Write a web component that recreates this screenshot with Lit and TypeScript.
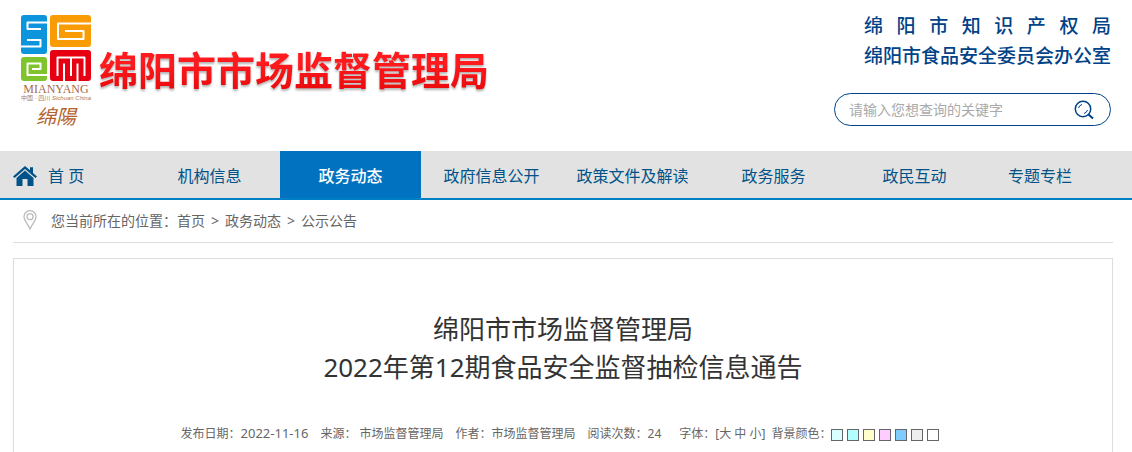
import { LitElement, html, css, svg } from "lit";
import { customElement } from "lit/decorators.js";
import { classMap } from "lit/directives/class-map.js";

const NAV = ["首 页", "机构信息", "政务动态", "政府信息公开", "政策文件及解读", "政务服务", "政民互动", "专题专栏"];
const SWATCHES = [
  ["浅蓝", "#d9ffff"],
  ["青色", "#b3ffff"],
  ["浅黄", "#ffffcc"],
  ["粉色", "#ffccff"],
  ["天蓝", "#80ccff"],
  ["浅灰", "#eeeeee"],
  ["白色", "#ffffff"],
];

@customElement("city-logo")
class CityLogo extends LitElement {
  static styles = css`
    :host { display: block; flex: none; }
    .art { display: block; overflow: visible; }
    .latin { font-family: "Liberation Serif", serif; font-size: 12px; fill: #a96a45; }
    .tiny { font-family: "Liberation Sans", "Noto Sans CJK SC", sans-serif; font-size: 6px; fill: #b07a58; }
    .slant { font-style: italic; }
    .brush { font-family: "Noto Sans CJK SC", sans-serif; font-size: 20px; font-style: italic; fill: #b4622d; }
  `;
  render() {
    return html`<svg class="art" width="72" height="112" viewBox="0 0 72 112" role="img" aria-label="绵阳">
      ${svg`
      <rect x="1" y="1" width="26" height="39" rx="3" fill="#0c94dc"/>
      <rect x="30" y="1" width="41" height="32" rx="3" fill="#f99b05"/>
      <rect x="1" y="43" width="26" height="24" rx="3" fill="#80c42d"/>
      <rect x="30" y="36" width="41" height="31" rx="3" fill="#e60012"/>
      <g fill="none" stroke="#fff" stroke-width="2" stroke-linejoin="round">
        <path d="M28 8.500H7.500V15H21"/>
        <path d="M0 32.500H20.500V26H7"/>
        <path d="M72 9.500H38V25H63.500V17H45"/>
        <path d="M28 61H7.500V49.500H20.500V55H12"/>
        <path d="M37.500 62V43.500H64.500V62M44 68V49.500M51 43.500V62M57.500 68V49.500"/>
      </g>
      <text class="latin" x="36" y="79" text-anchor="middle">MIANYANG</text>
      <text class="tiny" x="36" y="86" text-anchor="middle">中国 · 四川 <tspan class="slant">Sichuan China</tspan></text>
      <text class="brush" x="36" y="110" text-anchor="middle">绵陽</text>`}
    </svg>`;
  }
}

@customElement("app-root")
class AppRoot extends LitElement {
  static styles = css`
    :host { display: block; font-family: "Noto Sans", "Noto Sans CJK SC", sans-serif; color: #666; background: #fff; }
    * { box-sizing: border-box; }
    a { color: inherit; text-decoration: none; }
    .header { display: flex; justify-content: space-between; padding: 14px 21px 25px 20px; }
    .brand { display: flex; gap: 7px; }
    .name { margin: 28px 0 0; font-size: 39px; line-height: 56px; font-weight: 700; white-space: nowrap;
      color: transparent; background: linear-gradient(#ff1a1e 25%, #d90000 80%); background-clip: text; -webkit-background-clip: text;
      filter: drop-shadow(0 2px 1px rgba(0, 0, 0, 0.3)); }
    .side { display: flex; flex-direction: column; align-items: flex-end; }
    .offices { color: #004287; font-size: 19px; line-height: 30px; font-weight: 500; margin-top: -3px; }
    .office { margin: 0; }
    .spread { text-align: justify; text-align-last: justify; }
    .search { display: flex; align-items: center; width: 277px; height: 33px; margin-top: 22px; padding: 0 16px 0 14px;
      border: 1px solid #004287; border-radius: 17px; }
    .query { flex: 1; min-width: 0; border: 0; padding: 0; background: none; outline: none; font: inherit; font-size: 14px; color: #333; }
    .query::placeholder { color: #a9a9a9; opacity: 1; }
    .go { display: flex; border: 0; padding: 0; background: none; color: #004287; }
    .nav { display: grid; grid-template-columns: 139fr repeat(6, 141fr) 110fr; padding-right: 37px; background: #e2e2e2; border-bottom: 2px solid #0080c4; }
    .tab { display: flex; align-items: center; justify-content: center; height: 47px; font-size: 16px; color: #005288; white-space: nowrap; }
    .home { justify-content: flex-start; gap: 11px; padding-left: 13px; }
    .icon { margin-top: 3px; }
    .active { background: #0072bf; color: #fff; font-weight: 500; }
    .page { padding: 0 19px 0 13px; }
    .crumbs { display: flex; align-items: center; gap: 14px; height: 43px; padding: 0 0 2px 10px; border-bottom: 1px solid #ddd; font-size: 14px; }
    .sep { margin: 0 6px; }
    .article { margin-top: 15px; padding: 51px 20px 8px; border: 1px solid #ddd; border-bottom: 0; }
    .title { margin: 0; font-size: 26px; line-height: 38px; font-weight: 400; text-align: center; color: #333; }
    .meta { display: flex; justify-content: center; align-items: center; gap: 12px; margin-top: 38px; padding-right: 6px; font-size: 12px; line-height: 20px; white-space: nowrap; }
    .date { font-size: 13px; line-height: 16px; }
    .tools { display: flex; align-items: center; gap: 6px; margin-left: 6px; }
    .colors { display: flex; align-items: center; }
    .swatches { display: flex; gap: 4px; padding-top: 2px; }
    .swatch { width: 12px; height: 12px; padding: 0; border: 1px solid #666; }
  `;
  render() {
    return html`
      <header class="header">
        <div class="brand"><city-logo></city-logo><h1 class="name">绵阳市市场监督管理局</h1></div>
        <div class="side">
          <div class="offices">
            <p class="office spread">绵 阳 市 知 识 产 权 局</p>
            <p class="office">绵阳市食品安全委员会办公室</p>
          </div>
          <form class="search" role="search">
            <input class="query" type="text" aria-label="搜索" placeholder="请输入您想查询的关键字" />
            <button class="go" type="button" aria-label="搜索">
              <svg width="20" height="20" viewBox="0 0 20 20" fill="none" stroke="currentColor" stroke-width="1.5">
                <circle cx="9" cy="9" r="7.7" /><path d="M14.5 14.5L19 18.5" stroke-width="2" /><path d="M4.500 8A5 5 0 0 1 8 4.500M13.500 10A5 5 0 0 1 10 13.500" stroke-width="1" />
              </svg>
            </button>
          </form>
        </div>
      </header>
      <nav class="nav">
        ${NAV.map((label, i) => html`<a href="#" class=${classMap({ tab: true, home: i === 0, active: i === 2 })}>${i === 0
          ? html`<svg class="icon" width="24" height="20" viewBox="0 0 24 20" fill="currentColor"><path d="M12 0L17 4.3V1.3H20V7L24 10.5L22.4 12L12 3L1.6 12L0 10.5Z" /><path d="M12 4.5L20.5 12V20H14.5V13H9.5V20H3.5V12Z" /></svg>`
          : ""}<span>${label}</span></a>`)}
      </nav>
      <main class="page">
        <div class="crumbs">
          <svg width="14" height="20" viewBox="0 0 14 20" fill="none" stroke="#bbb" stroke-width="1.3"><path d="M7 19C5.5 15 1 10.500 1 6.700A6 6 0 0 1 13 6.700C13 10.500 8.500 15 7 19Z" /><circle cx="7" cy="6.700" r="3" /></svg>
          <span>您当前所在的位置：<a href="#">首页</a><span class="sep">&gt;</span><a href="#">政务动态</a><span class="sep">&gt;</span><a href="#">公示公告</a></span>
        </div>
        <article class="article">
          <h2 class="title">绵阳市市场监督管理局<br />2022年第12期食品安全监督抽检信息通告</h2>
          <div class="meta">
            <span>发布日期：<time class="date">2022-11-16</time></span><span>来源： 市场监督管理局</span><span>作者：市场监督管理局</span><span>阅读次数：24</span>
            <div class="tools">
              <span>字体：[<a href="#">大</a> <a href="#">中</a> <a href="#">小</a>]</span>
              <div class="colors"><span>背景颜色：</span><div class="swatches">
                ${SWATCHES.map(([label, color]) => html`<button class="swatch" type="button" aria-label=${label} style="background:${color}"></button>`)}
              </div></div>
            </div>
          </div>
        </article>
      </main>`;
  }
}
